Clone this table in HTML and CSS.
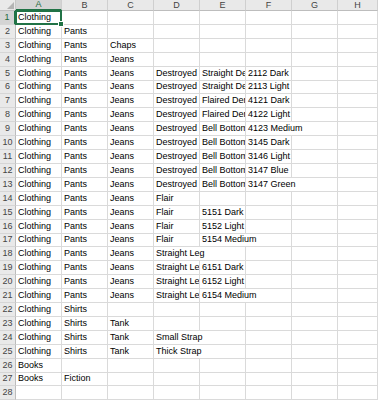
FILE: index.html
```html
<!DOCTYPE html>
<html>
<head>
<meta charset="utf-8">
<link rel="stylesheet" href="styles.css">
</head>
<body>
<div class="sheet">
  <div class="corner"><span class="tri"></span></div>
  <div class="ch sel">A</div><div class="ch">B</div><div class="ch">C</div><div class="ch">D</div><div class="ch">E</div><div class="ch">F</div><div class="ch">G</div><div class="ch">H</div>

  <div class="rh sel">1</div><div class="c a1">Clothing<span class="selbox"><span class="handle"></span></span></div><div class="c"></div><div class="c"></div><div class="c"></div><div class="c"></div><div class="c"></div><div class="c"></div><div class="c"></div>
  <div class="rh">2</div><div class="c">Clothing</div><div class="c">Pants</div><div class="c"></div><div class="c"></div><div class="c"></div><div class="c"></div><div class="c"></div><div class="c"></div>
  <div class="rh">3</div><div class="c">Clothing</div><div class="c">Pants</div><div class="c">Chaps</div><div class="c"></div><div class="c"></div><div class="c"></div><div class="c"></div><div class="c"></div>
  <div class="rh">4</div><div class="c">Clothing</div><div class="c">Pants</div><div class="c">Jeans</div><div class="c"></div><div class="c"></div><div class="c"></div><div class="c"></div><div class="c"></div>
  <div class="rh">5</div><div class="c">Clothing</div><div class="c">Pants</div><div class="c">Jeans</div><div class="c">Destroyed</div><div class="c">Straight Denim</div><div class="c">2112 Dark</div><div class="c"></div><div class="c"></div>
  <div class="rh">6</div><div class="c">Clothing</div><div class="c">Pants</div><div class="c">Jeans</div><div class="c">Destroyed</div><div class="c">Straight Denim</div><div class="c">2113 Light</div><div class="c"></div><div class="c"></div>
  <div class="rh">7</div><div class="c">Clothing</div><div class="c">Pants</div><div class="c">Jeans</div><div class="c">Destroyed</div><div class="c">Flaired Denim</div><div class="c">4121 Dark</div><div class="c"></div><div class="c"></div>
  <div class="rh">8</div><div class="c">Clothing</div><div class="c">Pants</div><div class="c">Jeans</div><div class="c">Destroyed</div><div class="c">Flaired Denim</div><div class="c">4122 Light</div><div class="c"></div><div class="c"></div>
  <div class="rh">9</div><div class="c">Clothing</div><div class="c">Pants</div><div class="c">Jeans</div><div class="c">Destroyed</div><div class="c">Bell Bottoms</div><div class="c s2">4123 Medium</div><div class="c"></div>
  <div class="rh">10</div><div class="c">Clothing</div><div class="c">Pants</div><div class="c">Jeans</div><div class="c">Destroyed</div><div class="c">Bell Bottoms</div><div class="c">3145 Dark</div><div class="c"></div><div class="c"></div>
  <div class="rh">11</div><div class="c">Clothing</div><div class="c">Pants</div><div class="c">Jeans</div><div class="c">Destroyed</div><div class="c">Bell Bottoms</div><div class="c">3146 Light</div><div class="c"></div><div class="c"></div>
  <div class="rh">12</div><div class="c">Clothing</div><div class="c">Pants</div><div class="c">Jeans</div><div class="c">Destroyed</div><div class="c">Bell Bottoms</div><div class="c">3147 Blue</div><div class="c"></div><div class="c"></div>
  <div class="rh">13</div><div class="c">Clothing</div><div class="c">Pants</div><div class="c">Jeans</div><div class="c">Destroyed</div><div class="c">Bell Bottoms</div><div class="c s2">3147 Green</div><div class="c"></div>
  <div class="rh">14</div><div class="c">Clothing</div><div class="c">Pants</div><div class="c">Jeans</div><div class="c">Flair</div><div class="c"></div><div class="c"></div><div class="c"></div><div class="c"></div>
  <div class="rh">15</div><div class="c">Clothing</div><div class="c">Pants</div><div class="c">Jeans</div><div class="c">Flair</div><div class="c">5151 Dark</div><div class="c"></div><div class="c"></div><div class="c"></div>
  <div class="rh">16</div><div class="c">Clothing</div><div class="c">Pants</div><div class="c">Jeans</div><div class="c">Flair</div><div class="c">5152 Light</div><div class="c"></div><div class="c"></div><div class="c"></div>
  <div class="rh">17</div><div class="c">Clothing</div><div class="c">Pants</div><div class="c">Jeans</div><div class="c">Flair</div><div class="c s2">5154 Medium</div><div class="c"></div><div class="c"></div>
  <div class="rh">18</div><div class="c">Clothing</div><div class="c">Pants</div><div class="c">Jeans</div><div class="c s2">Straight Leg</div><div class="c"></div><div class="c"></div><div class="c"></div>
  <div class="rh">19</div><div class="c">Clothing</div><div class="c">Pants</div><div class="c">Jeans</div><div class="c">Straight Leg</div><div class="c">6151 Dark</div><div class="c"></div><div class="c"></div><div class="c"></div>
  <div class="rh">20</div><div class="c">Clothing</div><div class="c">Pants</div><div class="c">Jeans</div><div class="c">Straight Leg</div><div class="c">6152 Light</div><div class="c"></div><div class="c"></div><div class="c"></div>
  <div class="rh">21</div><div class="c">Clothing</div><div class="c">Pants</div><div class="c">Jeans</div><div class="c">Straight Leg</div><div class="c s2">6154 Medium</div><div class="c"></div><div class="c"></div>
  <div class="rh">22</div><div class="c">Clothing</div><div class="c">Shirts</div><div class="c"></div><div class="c"></div><div class="c"></div><div class="c"></div><div class="c"></div><div class="c"></div>
  <div class="rh">23</div><div class="c">Clothing</div><div class="c">Shirts</div><div class="c">Tank</div><div class="c"></div><div class="c"></div><div class="c"></div><div class="c"></div><div class="c"></div>
  <div class="rh">24</div><div class="c">Clothing</div><div class="c">Shirts</div><div class="c">Tank</div><div class="c s2">Small Strap</div><div class="c"></div><div class="c"></div><div class="c"></div>
  <div class="rh">25</div><div class="c">Clothing</div><div class="c">Shirts</div><div class="c">Tank</div><div class="c s2">Thick Strap</div><div class="c"></div><div class="c"></div><div class="c"></div>
  <div class="rh">26</div><div class="c">Books</div><div class="c"></div><div class="c"></div><div class="c"></div><div class="c"></div><div class="c"></div><div class="c"></div><div class="c"></div>
  <div class="rh">27</div><div class="c">Books</div><div class="c">Fiction</div><div class="c"></div><div class="c"></div><div class="c"></div><div class="c"></div><div class="c"></div><div class="c"></div>
  <div class="rh">28</div><div class="c"></div><div class="c"></div><div class="c"></div><div class="c"></div><div class="c"></div><div class="c"></div><div class="c"></div><div class="c"></div>
</div>
</body>
</html>
```

FILE: styles.css
```css
html, body {
  margin: 0;
  padding: 0;
  background: #ffffff;
  overflow: hidden;
}
.sheet {
  display: grid;
  grid-template-columns: 16px repeat(7, 46px) 40px;
  grid-template-rows: 11px;
  grid-auto-rows: 13.92px;
  font-family: "Liberation Sans", Arial, sans-serif;
  font-size: 9px;
  color: #000;
  width: 378px;
  height: 400px;
  overflow: hidden;
}
.corner {
  position: relative;
  background: #e9e9e9;
  border-right: 1px solid #c6c6c6;
  border-bottom: 1px solid #bdbdbd;
  box-sizing: border-box;
}
.tri {
  position: absolute;
  right: 1px;
  bottom: 1px;
  width: 0;
  height: 0;
  border-left: 7px solid transparent;
  border-bottom: 7px solid #b4b4b4;
}
.ch {
  background: #e9e9e9;
  border-right: 1px solid #cfcfcf;
  border-bottom: 1px solid #bdbdbd;
  box-sizing: border-box;
  display: flex;
  align-items: center;
  justify-content: center;
  color: #444;
  font-size: 9px;
  line-height: 1;
}
.ch.sel {
  background: #d4d4d4;
  color: #1e6b41;
  border-bottom: 2px solid #217346;
}
.rh {
  background: #e9e9e9;
  border-right: 1px solid #bdbdbd;
  border-bottom: 1px solid #d6d6d6;
  box-sizing: border-box;
  display: flex;
  align-items: flex-end;
  justify-content: center;
  padding-bottom: 1px;
  color: #444;
  font-size: 9px;
  line-height: 11px;
}
.rh.sel {
  background: #d4d4d4;
  color: #1e6b41;
  border-right: 2px solid #217346;
}
.c {
  border-right: 1px solid #dadada;
  border-bottom: 1px solid #dadada;
  box-sizing: border-box;
  padding: 0 0 1px 2px;
  display: flex;
  align-items: flex-end;
  white-space: nowrap;
  overflow: hidden;
  line-height: 11px;
}
.s2 {
  grid-column: span 2;
}
.a1 {
  position: relative;
  overflow: visible;
}
.selbox {
  position: absolute;
  left: -1px;
  top: -1px;
  right: -1px;
  bottom: -1px;
  border: 2px solid #217346;
  pointer-events: none;
}
.handle {
  position: absolute;
  right: -4px;
  bottom: -4px;
  width: 4px;
  height: 4px;
  background: #217346;
  border: 1px solid #ffffff;
}
```
